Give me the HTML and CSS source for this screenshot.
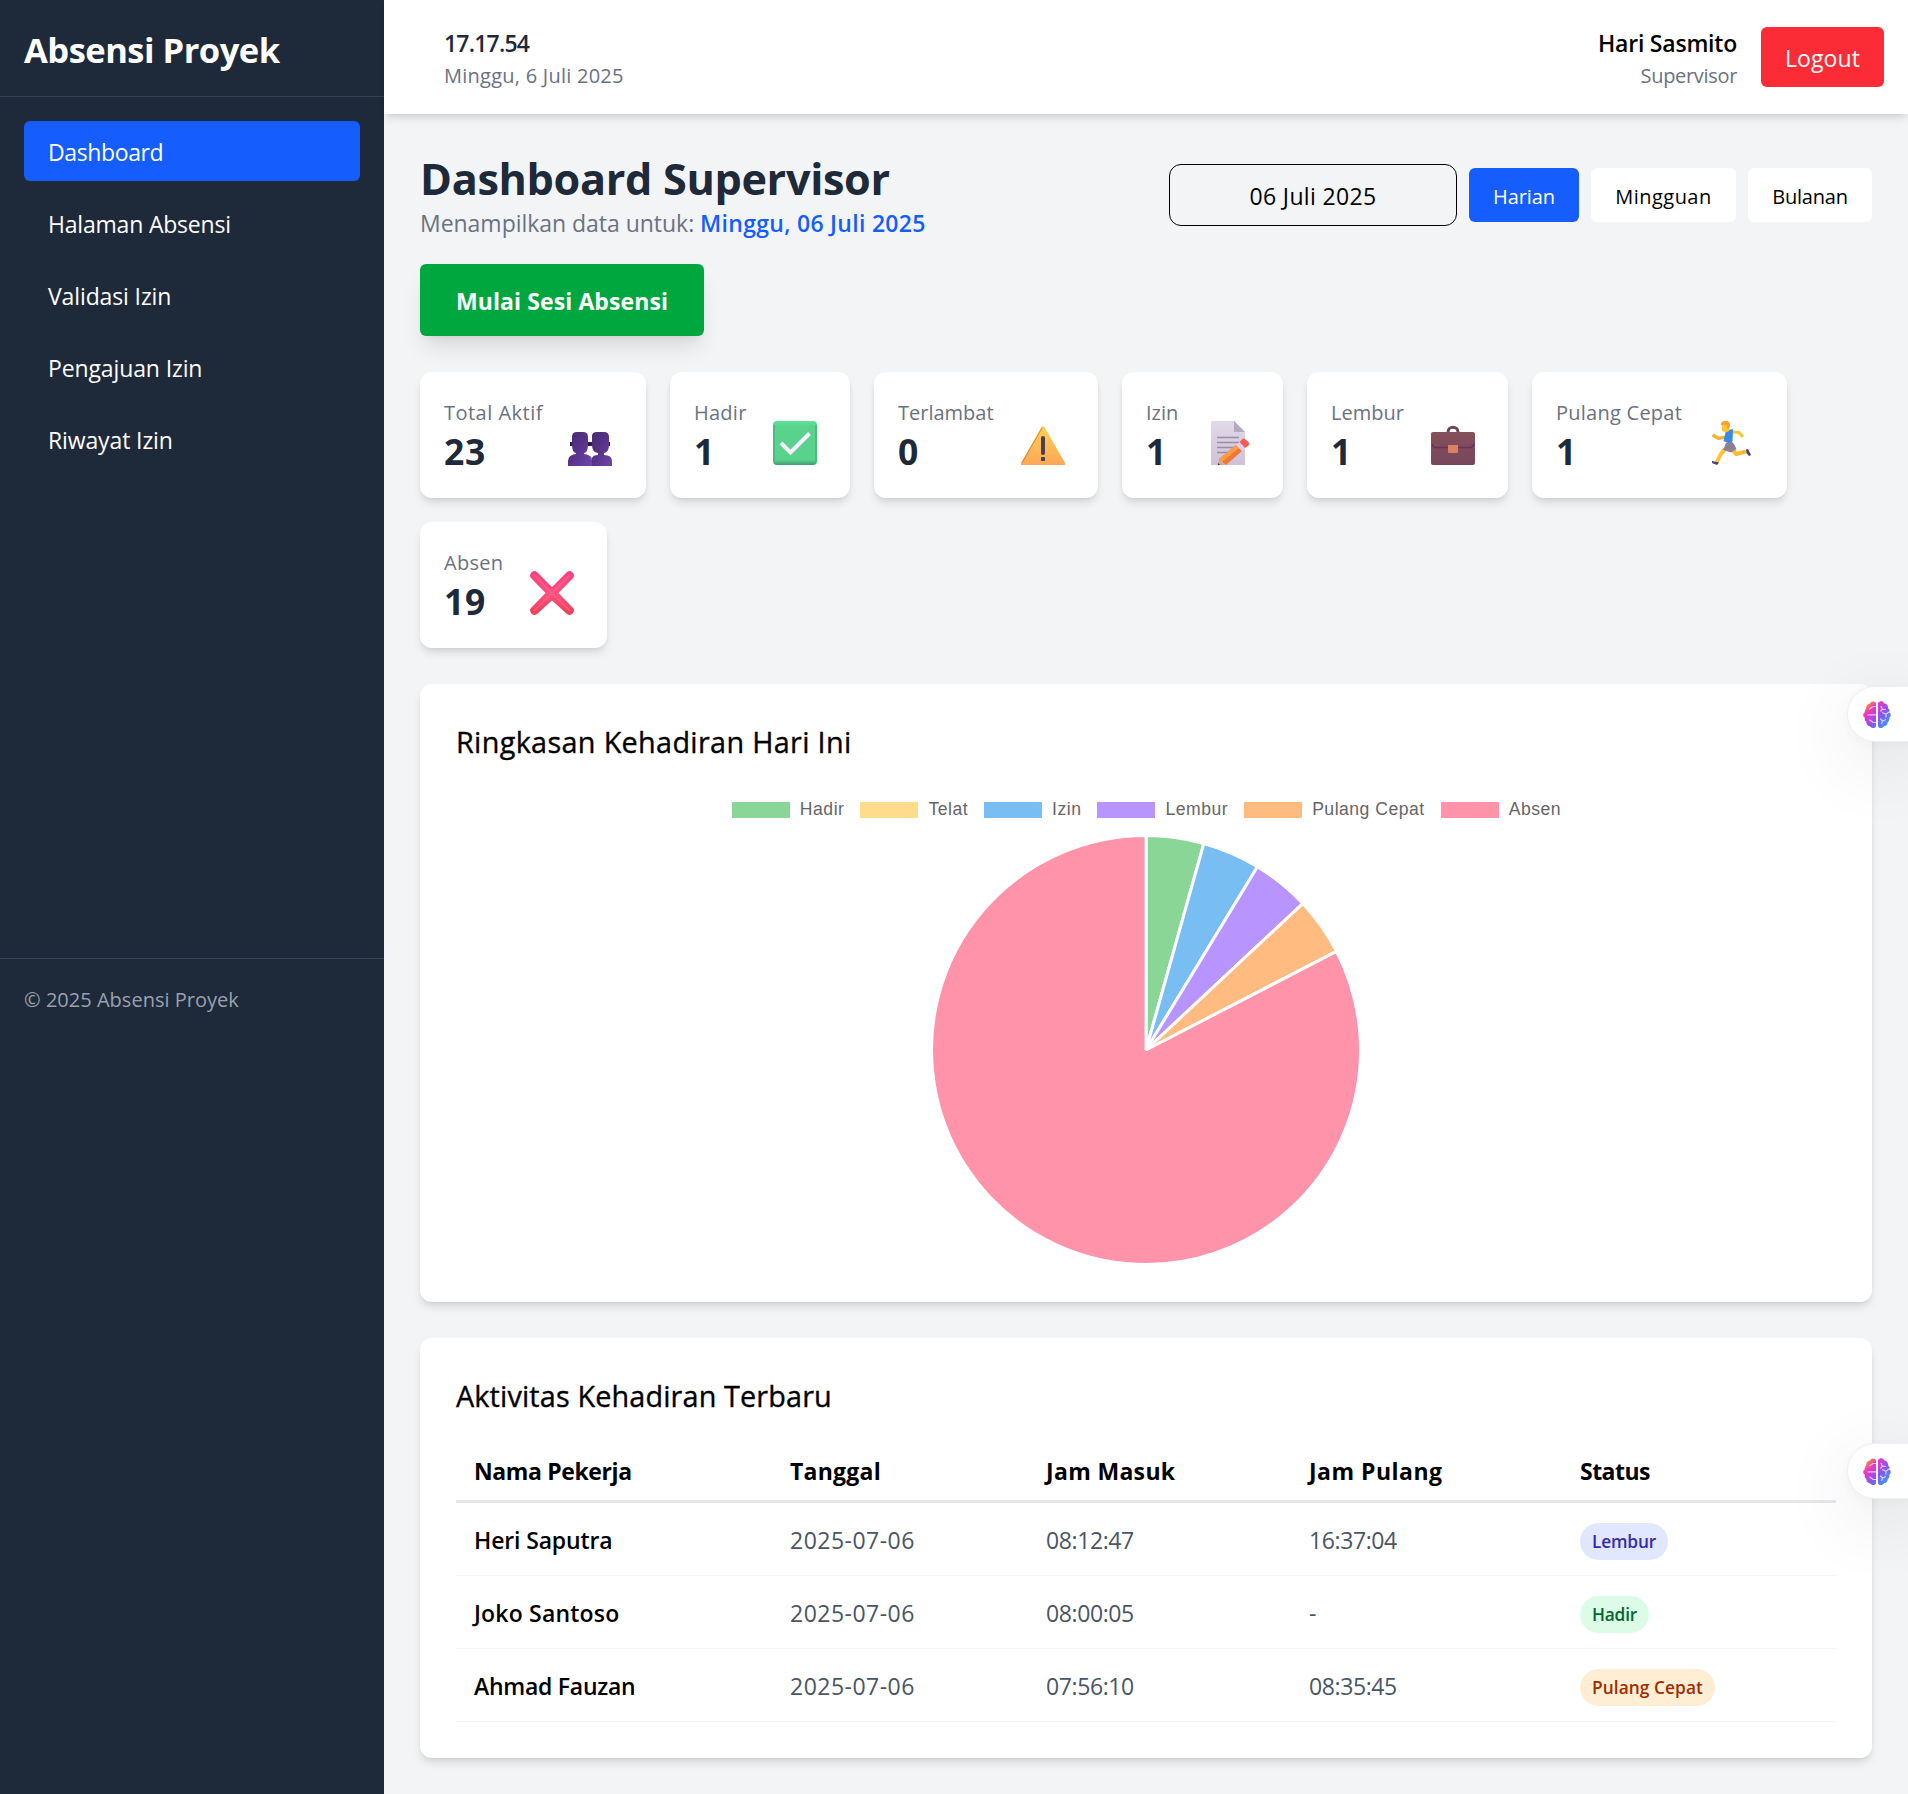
FILE: index.html
```
<!DOCTYPE html>
<html lang="id">
<head>
<meta charset="utf-8">
<title>Absensi Proyek</title>
<link rel="stylesheet" href="styles.css">
</head>
<body>
<svg class="defs" aria-hidden="true">
  <defs>
    <linearGradient id="g-person" x1="0" y1="0" x2="1" y2="1"><stop offset="0" stop-color="#47296b"/><stop offset=".5" stop-color="#58348b"/><stop offset="1" stop-color="#6f47ab"/></linearGradient>
    <linearGradient id="g-warn" x1="0" y1="0" x2="0" y2="1"><stop offset="0" stop-color="#ffd254"/><stop offset="1" stop-color="#ffa759"/></linearGradient>
    <linearGradient id="g-check" x1="0" y1="0" x2="0" y2="1"><stop offset="0" stop-color="#5fe39a"/><stop offset=".12" stop-color="#59d38c"/><stop offset=".88" stop-color="#59d38c"/><stop offset="1" stop-color="#3d9d71"/></linearGradient>
    <linearGradient id="g-cross" x1="0" y1="0" x2="0" y2="1"><stop offset="0" stop-color="#f4407e"/><stop offset=".5" stop-color="#fc5080"/><stop offset="1" stop-color="#ee3f55"/></linearGradient>
    <linearGradient id="g-page" x1="0" y1="0" x2="0" y2="1"><stop offset="0" stop-color="#e2d9e8"/><stop offset="1" stop-color="#cdc2d9"/></linearGradient>
    <linearGradient id="g-case" x1="0" y1="0" x2="0" y2="1"><stop offset="0" stop-color="#86505a"/><stop offset="1" stop-color="#75465b"/></linearGradient>
    <linearGradient id="g-brain" x1="0" y1="0" x2="1" y2="1"><stop offset="0" stop-color="#ff9a2e"/><stop offset=".13" stop-color="#f58a3c"/><stop offset=".3" stop-color="#ef35c4"/><stop offset=".58" stop-color="#8a54f2"/><stop offset="1" stop-color="#1bb4ff"/></linearGradient>
    <symbol id="brain" viewBox="0 0 28 28">
      <g fill="url(#g-brain)"><path d="M13 2.200C11.500-.3 8 .2 7 2.500 4.500 2.700 2.800 4.800 3.200 7.500 1.600 8.600 1.600 10.400 1.800 11.300-.3 12.500-.4 15.300 1.700 16.500 1.500 18.800 2.200 20.300 3.200 20.800 3.200 23.500 5 25.200 7 25.300 8.500 27.700 11.800 27.500 13 25.500ZM15 2.200C16.500-.3 20-.2 21 2.200 23.500 2.300 25.300 4.500 25 7.200 26.800 8.500 27 10.200 26.300 11.400 28.300 12.700 28.300 15.500 26.300 16.700 26.700 18.800 26 20.300 24.800 21 24.800 23.500 23 25.200 21 25.300 19.500 27.700 16.200 27.500 15 25.500Z"/></g>
      <path fill="none" stroke="#fff" stroke-opacity=".7" stroke-width="1.200" stroke-linecap="round" d="M13 5.500H10L6.500 8M13 13.800H5M13 21.500H10L6.800 19M18 5.500 19.500 8.200 22.500 8.500M19.500 8.200 17.800 10M27 10.500 23 13 19.500 11.800M23 13V16M17.500 18 19.500 20 22.500 18.700M19.500 20 18.700 22.500"/>
    </symbol>
  </defs>
</svg>
<div class="layout">
  <aside class="sidebar">
    <div class="sidebar-inner">
      <div class="brand">Absensi Proyek</div>
      <nav class="nav">
        <a class="nav-item nav-active ls-m4">Dashboard</a>
        <a class="nav-item ls-m2">Halaman Absensi</a>
        <a class="nav-item ls-m1">Validasi Izin</a>
        <a class="nav-item ls-m1">Pengajuan Izin</a>
        <a class="nav-item ls-m1">Riwayat Izin</a>
      </nav>
      <div class="sidebar-footer">© 2025 Absensi Proyek</div>
    </div>
  </aside>
  <div class="page">
    <header class="topbar">
      <div class="clock">
        <div class="clock-time">17.17.54</div>
        <div class="muted small ls-p2">Minggu, 6 Juli 2025</div>
      </div>
      <div class="account">
        <div class="user">
          <div class="user-name">Hari Sasmito</div>
          <div class="muted small ls-m3">Supervisor</div>
        </div>
        <button class="btn btn-logout">Logout</button>
      </div>
    </header>
    <main class="content">
      <section class="heading">
        <div>
          <h1>Dashboard Supervisor</h1>
          <p class="subtitle">Menampilkan data untuk: <span class="subtitle-date">Minggu, 06 Juli 2025</span></p>
        </div>
        <div class="filters">
          <div class="date-input">06 Juli 2025</div>
          <button class="btn range range-active">Harian</button>
          <button class="btn range range-week">Mingguan</button>
          <button class="btn range range-month">Bulanan</button>
        </div>
      </section>
      <button class="btn btn-start">Mulai Sesi Absensi</button>
      <section class="stats">
        <div class="stat stat-total">
          <div><div class="stat-label ls-p4">Total Aktif</div><div class="stat-value">23</div></div>
          <svg class="stat-icon stat-icon-people" viewBox="0 0 44 44"><path fill="#32174f" d="M2 21h20v4H2zM22 21h20v4H22z"/><path fill="url(#g-person)" d="M24 45V37Q25 34 30 34V32Q24 31 24 24V15Q24 11 29 11H36Q41 11 41 16V24Q41 31 36 32V34Q44 34 44 40V45Z"/><path fill="url(#g-person)" d="M0 45V40Q0 34 8 33V32Q4 31 4 24V16Q4 11 9 11H15Q20 11 20 16V24Q20 31 16 32V33Q24 34 24 39V45Z"/></svg>
        </div>
        <div class="stat stat-hadir">
          <div><div class="stat-label ls-p2">Hadir</div><div class="stat-value">1</div></div>
          <svg class="stat-icon" viewBox="0 0 44 44"><rect width="44" height="44" rx="4" fill="url(#g-check)"/><path d="M1 4V40M43 4V40" stroke="#3fa374" stroke-width="1.500" opacity=".6"/><path d="M8 22 17.500 31.500 36.500 12.500" fill="none" stroke="#f7edff" stroke-width="4"/></svg>
        </div>
        <div class="stat stat-terlambat">
          <div><div class="stat-label">Terlambat</div><div class="stat-value">0</div></div>
          <svg class="stat-icon" viewBox="0 0 44 44"><path fill="url(#g-warn)" d="M20.500 6Q22 4 23.500 6L44 42V44H0V42Z"/><path d="M1 42 21 7" stroke="#c98a38" stroke-width="1"/><rect x="20" y="15" width="4" height="19" rx="2" fill="#4b3f50"/><rect x="20" y="36" width="4" height="4" rx="1" fill="#4b3f50"/></svg>
        </div>
        <div class="stat stat-izin">
          <div><div class="stat-label">Izin</div><div class="stat-value">1</div></div>
          <svg class="stat-icon" viewBox="0 0 44 44"><path fill="url(#g-page)" d="M5 0H28L39 11V44H5Z"/><path fill="#b5a9bf" d="M28 0 39 11H28Z"/><path d="M11 16.500H33M11 21.500H33M11 26.500H29M11 31.500H24" stroke="#98909e" stroke-width="1.500"/><path fill="#f07835" d="M30 24 36 30 20 44 13 38Z"/><path fill="#ff9a45" d="M30 24 33 27 16 41 13 38Z"/><path fill="#dfd0ee" d="M30 24 33.500 21 39 27 36 30Z"/><path fill="#fa5a50" d="M33.500 21 37 17.500Q39 17 43 22 44 24 39 27Z"/><path fill="#d5a68d" d="M13 38 19 44H12Z"/><path fill="#4b1f46" d="M12 42 14 44H12Z"/></svg>
        </div>
        <div class="stat stat-lembur">
          <div><div class="stat-label">Lembur</div><div class="stat-value">1</div></div>
          <svg class="stat-icon" viewBox="0 0 44 44"><path d="M17 12V11C17 4.500 27 4.500 27 11V12" fill="none" stroke="#72474b" stroke-width="3"/><rect y="11" width="44" height="33" rx="2" fill="url(#g-case)"/><path d="M1 23Q2 26.500 5 26.500H39Q42 26.500 43 23" fill="none" stroke="#653458" stroke-width="1.500"/><path fill="#dc8064" d="M17 24H27V31Q27 32 26 32H18Q17 32 17 31Z"/></svg>
        </div>
        <div class="stat stat-cepat">
          <div><div class="stat-label ls-p2">Pulang Cepat</div><div class="stat-value">1</div></div>
          <svg class="stat-icon stat-icon-runner" viewBox="0 0 44 44"><g fill="none" stroke-linejoin="round"><path d="M3.500 14 10 17.500 16 16" stroke="#fbb02e" stroke-width="3.200"/><path d="M23 11 30 11.500 34 16" stroke="#ffc533" stroke-width="3.200"/><path d="M16 28 11.500 33.500 7.500 42" stroke="#ffc233" stroke-width="4"/><path d="M24 29 27 33 37 30.500" stroke="#ffb92e" stroke-width="4"/></g><path fill="#378ae8" d="M17 9.500 24 8 23.500 20 21 23 14.500 20Z"/><path fill="#8d8096" d="M17 22 23 20.500Q26 24 27.500 28L22 31.500 14 29Z"/><path fill="#ffc533" d="M13 4H20V10L17 11.500 13 10Z"/><path fill="#fb9f2c" d="M12 2Q14-.5 17 0 21 0 21 5L20 8 18 7V4H12Z"/><path fill="#4d3a80" d="M3 40 10 41.500 8 44 3 42ZM37 28.500 39 28 42 34 40 35 37.500 32Z"/></svg>
        </div>
        <div class="stat stat-absen">
          <div><div class="stat-label ls-p2">Absen</div><div class="stat-value">19</div></div>
          <svg class="stat-icon" viewBox="0 0 44 44"><path fill="url(#g-cross)" d="M2 1Q4-1 7 1L22 16 37 1Q40-1 42 1L43 2Q45 5 43 7L28.500 22 43 37Q45 39 43 42L42 43Q40 45 37 43L22 29.500 7 43Q4 45 2 43L1 42Q-1 39 1 37L15.500 22 1 7Q-1 5 1 2Z"/><path d="M4 4 40 40M40 4 4 40" stroke="#ff6790" stroke-width="2" opacity=".5"/></svg>
        </div>
      </section>
      <section class="card chart-card">
        <h2 class="ls-p3">Ringkasan Kehadiran Hari Ini</h2>
        <div class="legend">
          <span class="key"><i class="swatch c-hadir"></i>Hadir</span>
          <span class="key"><i class="swatch c-telat"></i>Telat</span>
          <span class="key"><i class="swatch c-izin"></i>Izin</span>
          <span class="key"><i class="swatch c-lembur"></i>Lembur</span>
          <span class="key"><i class="swatch c-cepat"></i>Pulang Cepat</span>
          <span class="key"><i class="swatch c-absen"></i>Absen</span>
        </div>
        <svg class="pie" viewBox="-215 -215 430 430">
          <g stroke="#fff" stroke-width="3" stroke-linejoin="bevel">
            <path fill="#89d696" d="M0 0V-214.500A214.500 214.500 0 0 1 57.860-206.550Z"/>
            <path fill="#79bef2" d="M0 0 57.860-206.550A214.500 214.500 0 0 1 111.450-183.270Z"/>
            <path fill="#b794ff" d="M0 0 111.450-183.270A214.500 214.500 0 0 1 156.760-146.410Z"/>
            <path fill="#ffbb80" d="M0 0 156.760-146.410A214.500 214.500 0 0 1 190.460-98.680Z"/>
            <path fill="#ff93aa" d="M0 0 190.460-98.680A214.500 214.500 0 1 1 0-214.500Z"/>
          </g>
        </svg>
      </section>
      <section class="card">
        <h2 class="ls-p1">Aktivitas Kehadiran Terbaru</h2>
        <table>
          <colgroup><col class="col-name"><col class="col-date"><col class="col-in"><col class="col-out"><col></colgroup>
          <thead><tr><th class="ls-m4">Nama Pekerja</th><th class="ls-p2">Tanggal</th><th class="ls-p3">Jam Masuk</th><th class="ls-p4">Jam Pulang</th><th class="ls-m5">Status</th></tr></thead>
          <tbody>
            <tr><td class="name">Heri Saputra</td><td class="date">2025-07-06</td><td>08:12:47</td><td>16:37:04</td><td><span class="badge badge-lembur">Lembur</span></td></tr>
            <tr><td class="name ls-p2">Joko Santoso</td><td class="date">2025-07-06</td><td>08:00:05</td><td>-</td><td><span class="badge badge-hadir">Hadir</span></td></tr>
            <tr><td class="name ls-m2">Ahmad Fauzan</td><td class="date">2025-07-06</td><td>07:56:10</td><td>08:35:45</td><td><span class="badge badge-cepat">Pulang Cepat</span></td></tr>
          </tbody>
        </table>
      </section>
    </main>
  </div>
</div>
<div class="assist assist-top"><svg class="assist-icon"><use href="#brain"/></svg></div>
<div class="assist assist-bottom"><svg class="assist-icon"><use href="#brain"/></svg></div>
</body>
</html>
```
FILE: styles.css
```
* { box-sizing: border-box; margin: 0; padding: 0; }

body {
  position: relative;
  overflow-x: hidden;
  background: #f3f4f6;
  color: #000;
  font: 400 23px/36px "Open Sans", "Noto Sans", sans-serif;
}

.defs { position: absolute; width: 0; height: 0; }
.muted { color: #6a7282; }
.small { font-size: 20px; line-height: 30px; }

/* letter spacing helpers */
.ls-m5 { letter-spacing: -.53px; }
.ls-m4 { letter-spacing: -.38px; }
.ls-m3 { letter-spacing: -.32px; }
.ls-m2 { letter-spacing: -.2px; }
.ls-m1 { letter-spacing: -.12px; }
.ls-p1 { letter-spacing: .14px; }
.ls-p2 { letter-spacing: .25px; }
.ls-p3 { letter-spacing: .33px; }
.ls-p4 { letter-spacing: .48px; }

.layout { display: flex; min-height: 1794px; }

/* sidebar */
.sidebar { flex: none; width: 384px; background: #1e2939; color: #fff; }
.sidebar-inner { display: flex; flex-direction: column; height: 1037px; }
.brand {
  padding: 26px 24px 22px;
  border-bottom: 1px solid #364153;
  font-size: 34.5px;
  line-height: 48px;
  font-weight: 700;
  letter-spacing: -.5px;
}
.nav { flex: 1; display: flex; flex-direction: column; gap: 12px; padding: 24px; }
.nav-item { padding: 13px 24px 11px; border-radius: 6px; }
.nav-active { background: #155dfc; }
.sidebar-footer {
  padding: 26px 24px 22px;
  border-top: 1px solid #364153;
  color: #99a1af;
  font-size: 20px;
  line-height: 30px;
  letter-spacing: .02px;
}

/* top bar */
.page { flex: 1; min-width: 0; }
.topbar {
  display: flex;
  justify-content: space-between;
  align-items: center;
  height: 114px;
  padding: 0 24px 0 60px;
  background: #fff;
  box-shadow: 0 6px 9px -1.5px rgba(0,0,0,.1), 0 3px 6px -3px rgba(0,0,0,.1);
}
.clock, .user { padding-top: 2px; }
.clock-time { color: #1e2939; font-weight: 600; letter-spacing: -.8px; }
.account { display: flex; align-items: center; gap: 24px; }
.user { text-align: right; }
.user-name { font-weight: 600; letter-spacing: -.22px; }

.btn { border: 0; border-radius: 6px; font: inherit; text-align: center; white-space: nowrap; }
.btn-logout { width: 123px; height: 60px; padding-top: 2px; background: #fb2c36; color: #fff; letter-spacing: .1px; }

/* content */
.content { padding: 36px; }
.heading { display: flex; justify-content: space-between; align-items: center; }
h1 { color: #1e2939; font-size: 43.2px; line-height: 54px; font-weight: 700; letter-spacing: -.33px; padding-top: 2px; margin-bottom: -2px; }
.subtitle { color: #6a7282; letter-spacing: -.03px; padding-top: 1px; margin-bottom: -1px; }
.subtitle-date { color: #155dfc; font-weight: 600; letter-spacing: .29px; }
.filters { display: flex; align-items: center; gap: 12px; }
.date-input {
  width: 288px;
  height: 62px;
  padding-top: 14px;
  border: 1px solid #000;
  border-radius: 12px;
  text-align: center;
  line-height: 34px;
  letter-spacing: .34px;
}
.range { height: 54px; width: 110px; padding-top: 3px; background: #fff; font-size: 20px; font-weight: 500; }
.range-active { background: #155dfc; color: #fff; letter-spacing: -.1px; }
.range-week { width: 145px; letter-spacing: .45px; }
.range-month { width: 124px; letter-spacing: -.2px; }
.btn-start {
  display: block;
  width: 284px;
  height: 72px;
  margin-top: 24px;
  padding-top: 2px;
  background: #00a63e;
  color: #fff;
  font-weight: 700;
  letter-spacing: .1px;
  box-shadow: 0 15px 22px -4px rgba(0,0,0,.1), 0 6px 9px -6px rgba(0,0,0,.1);
}

/* stat cards */
.stats { display: flex; flex-wrap: wrap; gap: 24px; margin-top: 36px; }
.stat, .card {
  background: #fff;
  border-radius: 12px;
  box-shadow: 0 6px 9px -1.5px rgba(0,0,0,.1), 0 3px 6px -3px rgba(0,0,0,.1);
}
.stat { display: flex; justify-content: space-between; align-items: flex-end; height: 126px; padding: 24px 33px 24px 24px; }
.stat-total { width: 226px; }
.stat-hadir { width: 180px; }
.stat-terlambat { width: 224px; }
.stat-izin { width: 161px; }
.stat-lembur { width: 201px; }
.stat-cepat { width: 255px; }
.stat-absen { width: 187px; }
.stat-label { padding-top: 2px; margin-bottom: -2px; color: #6a7282; font-size: 20px; line-height: 30px; white-space: nowrap; }
.stat-value { padding-top: 1px; margin-bottom: -1px; color: #1e2939; font-size: 35.5px; line-height: 48px; font-weight: 700; letter-spacing: .6px; }
.stat-icon { flex: none; width: 44px; height: 44px; margin-bottom: 9px; overflow: visible; }
.stat-icon-people { margin-right: 1px; }
.stat-icon-runner { margin-right: 1px; }

/* cards */
.card { margin-top: 36px; padding: 36px; }
.chart-card { height: 618px; }
h2 {
  margin-bottom: 23px;
  padding-top: 1px;
  font-size: 28.8px;
  line-height: 42px;
  font-weight: 500;
  -webkit-text-stroke: .35px #000;
}
.legend {
  display: flex;
  justify-content: center;
  gap: 15px;
  padding-top: 14px;
  color: #666;
  font: 17.6px/18px "Liberation Sans", Arial, sans-serif;
  letter-spacing: .5px;
}
.key { display: flex; align-items: center; }
.swatch { width: 58px; height: 16px; margin: 2px 10px 0 1px; }
.c-hadir { background: #89d696; }
.c-telat { background: #ffdc8c; }
.c-izin { background: #79bef2; }
.c-lembur { background: #b794ff; }
.c-cepat { background: #ffbb80; }
.c-absen { background: #ff93aa; }
.pie { display: block; width: 430px; height: 430px; margin: 17px auto 0; }

/* table */
table { width: 100%; table-layout: fixed; border-collapse: separate; border-spacing: 0; }
.col-name { width: 316px; }
.col-date { width: 256px; }
.col-in { width: 263px; }
.col-out { width: 271px; }
th { height: 63px; padding: 2px 18px 1px; border-bottom: 3px solid #e5e7eb; text-align: left; font-weight: 700; }
td { height: 73px; padding: 2px 18px 0; border-bottom: 1px solid #f3f4f6; color: #4a5565; letter-spacing: -.4px; }
td.name { color: #000; font-weight: 600; letter-spacing: -.14px; }
td.name.ls-p2 { letter-spacing: .2px; }
td.name.ls-m2 { letter-spacing: -.26px; }
td.date { letter-spacing: .48px; }
.badge {
  display: block;
  width: max-content;
  height: 37px;
  margin-top: 2px;
  padding: 1px 12px 0;
  border-radius: 18.5px;
  font-size: 17.3px;
  font-weight: 600;
}
.badge-lembur { background: #e0e7ff; color: #372aac; letter-spacing: -.17px; }
.badge-hadir { background: #dcfce7; color: #016630; letter-spacing: -.21px; }
.badge-cepat { background: #ffedd4; color: #9f2d00; letter-spacing: .08px; }

/* assistant tabs docked to the right edge */
.assist {
  position: absolute;
  right: -7px;
  width: 68px;
  height: 56px;
  padding: 14px 15px;
  border: 1px solid #efeff1;
  border-radius: 28px 0 0 28px;
  background: #fff;
  box-shadow: 0 20px 75px rgba(0,0,0,.1), 0 3px 12px rgba(0,0,0,.03);
}
.assist-top { top: 686px; }
.assist-bottom { top: 1443px; }
.assist-icon { display: block; width: 28px; height: 28px; }
```
